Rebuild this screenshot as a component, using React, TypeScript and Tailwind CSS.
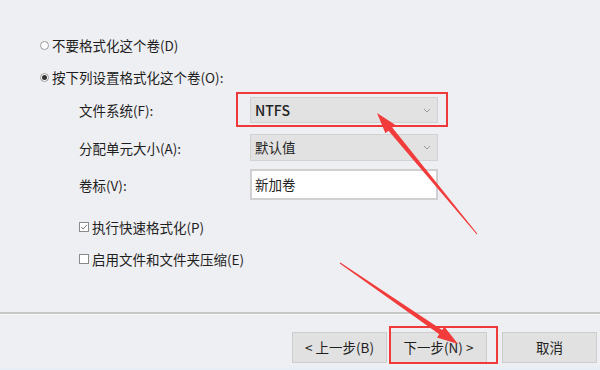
import React from "react";

type Pt = [number, number];

function arrowPoints(tail: Pt, tip: Pt, headLen: number, headW: number, shaftHead: number, shaftTail: number): string {
  const dx = tip[0] - tail[0];
  const dy = tip[1] - tail[1];
  const len = Math.sqrt(dx * dx + dy * dy);
  const ux = dx / len;
  const uy = dy / len;
  const px = -uy;
  const py = ux;
  const bx = tip[0] - ux * headLen;
  const by = tip[1] - uy * headLen;
  const pts: Pt[] = [
    [tail[0] + px * shaftTail / 2, tail[1] + py * shaftTail / 2],
    [bx + px * shaftHead / 2, by + py * shaftHead / 2],
    [bx + px * headW / 2, by + py * headW / 2],
    [tip[0], tip[1]],
    [bx - px * headW / 2, by - py * headW / 2],
    [bx - px * shaftHead / 2, by - py * shaftHead / 2],
    [tail[0] - px * shaftTail / 2, tail[1] - py * shaftTail / 2],
  ];
  return pts.map((p) => `${p[0].toFixed(1)},${p[1].toFixed(1)}`).join(" ");
}

function Chevron() {
  return (
    <svg width="8" height="5" viewBox="0 0 8 5" className="shrink-0">
      <path d="M1 1 L4 4 L7 1" fill="none" stroke="#9a9a9a" strokeWidth="1" />
    </svg>
  );
}

function Radio({ checked }: { checked?: boolean }) {
  return (
    <span className="w-[9px] h-[9px] rounded-full border border-[#9a9a9a] bg-white flex items-center justify-center shrink-0">
      {checked ? <span className="w-[5px] h-[5px] rounded-full bg-[#333]" /> : null}
    </span>
  );
}

function Check({ checked }: { checked?: boolean }) {
  return (
    <span className="w-[10px] h-[10px] border border-[#8a8a8a] bg-white flex items-center justify-center shrink-0">
      {checked ? (
        <svg width="8" height="8" viewBox="0 0 8 8">
          <path d="M1.2 4.2 L3.2 6 L6.8 1.8" fill="none" stroke="#777" strokeWidth="1" />
        </svg>
      ) : null}
    </span>
  );
}

export default function App() {
  return (
    <div
      className="relative w-[600px] h-[370px] bg-[#eeeff2] overflow-hidden text-[13.5px] text-[#1e1e1e]"
      style={{ fontFamily: "'Noto Sans CJK SC', 'Noto Sans', sans-serif" }}
    >
      <div className="h-[312px] pl-[40px] pt-[36px]">
        <div className="flex items-center gap-[3px] h-[18px] leading-[18px]">
          <Radio />
          <span>不要格式化这个卷(D)</span>
        </div>
        <div className="flex items-center gap-[3px] h-[18px] leading-[18px] mt-[14px]">
          <Radio checked />
          <span>按下列设置格式化这个卷(O):</span>
        </div>
        <div className="pl-[39px]">
          <div className="flex items-center mt-[11px]">
            <span className="w-[171px] leading-[18px]">文件系统(F):</span>
            <div className="w-[188px] h-[26px] bg-[#e2e2e2] border border-[#d2d2d2] flex items-center justify-between pl-[4px] pr-[6px]">
              <span className="text-[14px] font-medium text-[#222]">NTFS</span>
              <Chevron />
            </div>
          </div>
          <div className="flex items-center mt-[11px]">
            <span className="w-[171px] leading-[18px]">分配单元大小(A):</span>
            <div className="w-[188px] h-[27px] bg-[#e2e2e2] border border-[#d2d2d2] flex items-center justify-between pl-[4px] pr-[6px]">
              <span className="text-[13.5px] text-[#222]">默认值</span>
              <Chevron />
            </div>
          </div>
          <div className="flex items-center mt-[8px]">
            <span className="w-[171px] leading-[18px]">卷标(V):</span>
            <div className="w-[188px] h-[31px] bg-white border-2 border-[#d0d0d0] flex items-center pl-[3px]">
              <span className="text-[13.5px] text-[#222]">新加卷</span>
            </div>
          </div>
          <div className="flex items-center gap-[3px] h-[18px] leading-[18px] mt-[18px]">
            <Check checked />
            <span>执行快速格式化(P)</span>
          </div>
          <div className="flex items-center gap-[3px] h-[18px] leading-[18px] mt-[14px]">
            <Check />
            <span>启用文件和文件夹压缩(E)</span>
          </div>
        </div>
      </div>
      <div className="h-[2px] bg-[#c8c8c8]" />
      <div className="h-[1px] bg-[#f7f7f7]" />
      <div className="flex justify-end pr-[3px] pt-[17px]">
        <div className="w-[95px] h-[31px] bg-[#e1e1e1] border border-[#cdcdcd] flex items-center justify-center leading-none">
          &lt; 上一步(B)
        </div>
        <div className="w-[97px] h-[31px] ml-[3px] bg-[#e1e1e1] border border-[#cdcdcd] flex items-center justify-center leading-none">
          下一步(N) &gt;
        </div>
        <div className="w-[95px] h-[31px] ml-[15px] bg-[#e1e1e1] border border-[#cdcdcd] flex items-center justify-center leading-none">
          取消
        </div>
      </div>
      <div className="absolute left-0 right-0 bottom-0 h-[3px] bg-[#e8eef6]" />

      {/* annotations */}
      <div className="absolute left-[236px] top-[92px] w-[212px] h-[35px] border-2 border-[#f03a3a]" />
      <div className="absolute left-[389px] top-[326px] w-[109px] h-[38px] border-2 border-[#f03a3a]" />
      <svg className="absolute inset-0 pointer-events-none" width="600" height="370">
        <polygon points={arrowPoints([477, 234], [377, 113], 21, 13, 5, 1)} fill="#f23b3b" />
        <polygon points={arrowPoints([340, 263], [458, 344], 21, 13, 5, 1)} fill="#f23b3b" />
      </svg>
    </div>
  );
}
